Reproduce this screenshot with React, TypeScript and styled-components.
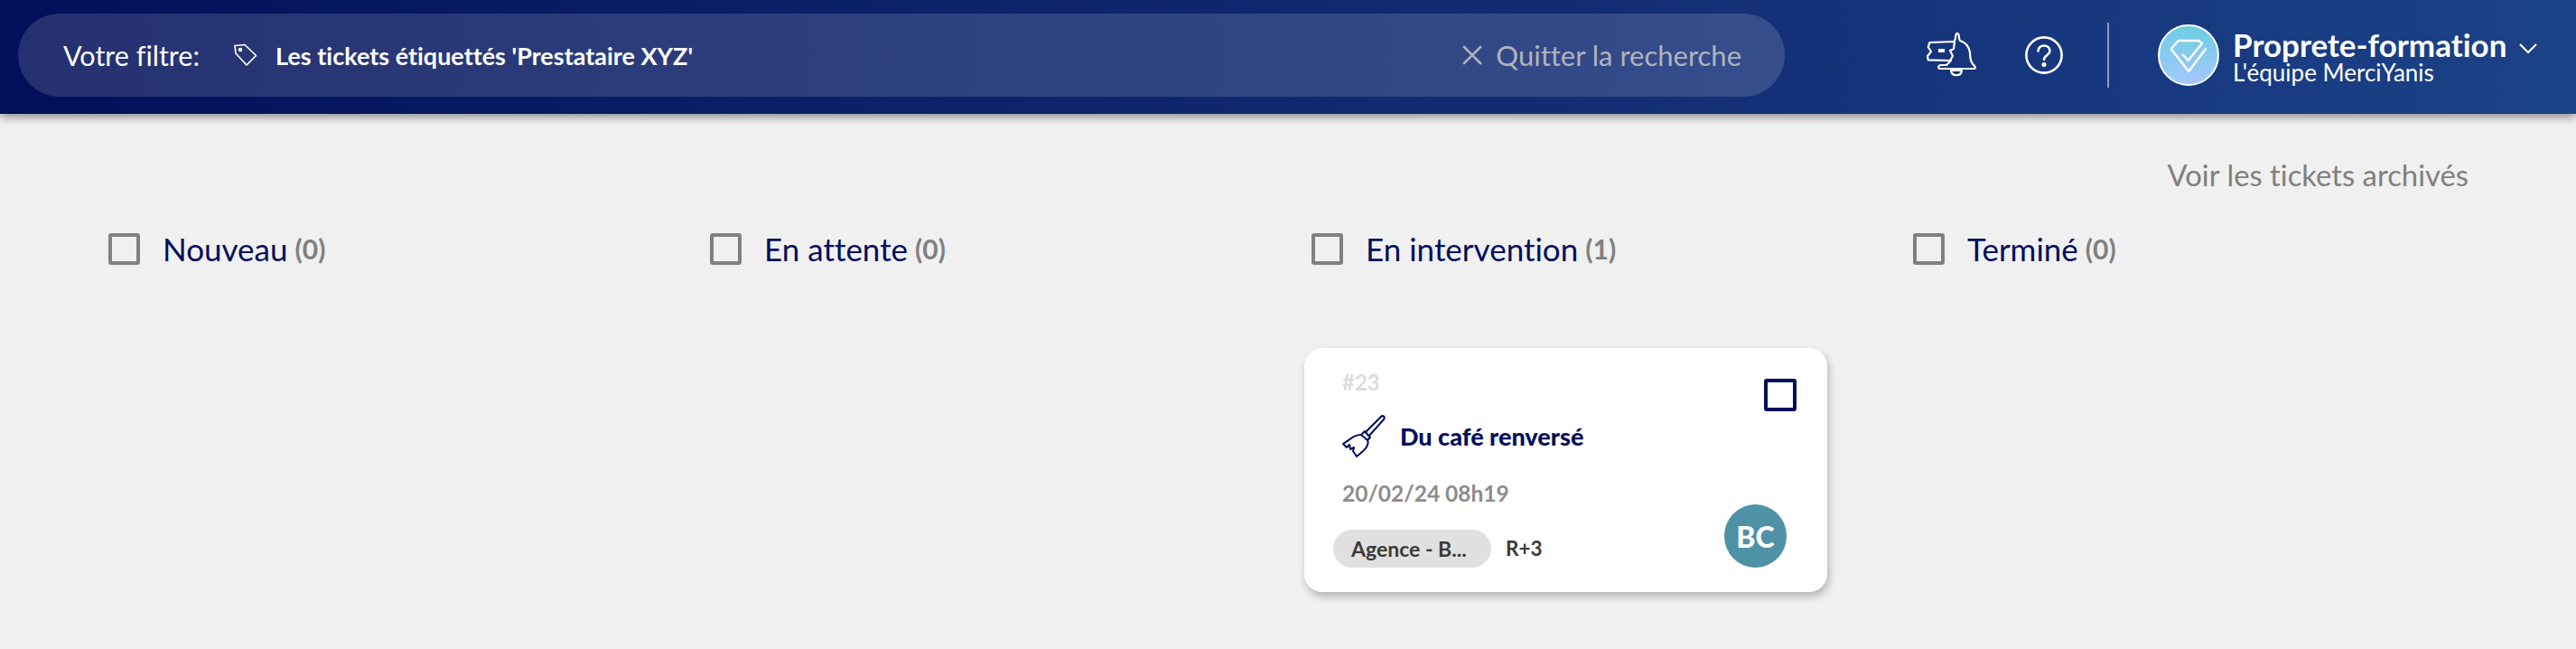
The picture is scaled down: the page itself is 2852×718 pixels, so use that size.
import React from "react";
import styled, { createGlobalStyle } from "styled-components";

const Global = createGlobalStyle`
  html, body { margin: 0; padding: 0; background: #f0f0f0; }
  body { font-family: Lato, "Noto Sans", sans-serif; overflow: hidden; font-variant-ligatures: none; }
`;
const Page = styled.div`
  width: 2852px;
  height: 718px;
  background: #f0f0f0;
  overflow: hidden;
`;
const Header = styled.header`
  height: 126px;
  box-sizing: border-box;
  display: flex;
  align-items: center;
  padding: 0 0 4px 20px;
  background: linear-gradient(90deg, #020f5a 0%, #0a1f68 30%, #122c74 60%, #1c4287 100%);
  box-shadow: 0 3px 10px rgba(0, 0, 0, 0.45);
  position: relative;
`;
const FilterPill = styled.div`
  width: 1956px;
  height: 92px;
  border-radius: 46px;
  background: rgba(255, 255, 255, 0.14);
  display: flex;
  align-items: center;
  padding: 0 48px 0 50px;
  box-sizing: border-box;
  color: #fff;
`;
const FilterLabel = styled.span`
  font-size: 30.5px;
  margin-right: 37px;
`;
const FilterValue = styled.span`
  font-size: 27px;
  font-weight: 700;
  margin-left: 19px;
`;
const Quit = styled.span`
  margin-left: auto;
  display: flex;
  align-items: center;
  gap: 15px;
  color: #b0b3bd;
  font-size: 31px;
`;
const HeaderRight = styled.div`
  display: flex;
  align-items: center;
  margin-left: 157px;
  color: #fff;
`;
const HelpSlot = styled.div`
  display: flex;
  margin-left: 53px;
`;
const Divider = styled.div`
  width: 2px;
  height: 72px;
  margin-left: 49px;
  background: rgba(255, 255, 255, 0.5);
`;
const Avatar = styled.div`
  width: 68px;
  height: 68px;
  box-sizing: border-box;
  margin-left: 54px;
  border-radius: 50%;
  border: 2px solid #fff;
  background: linear-gradient(180deg, #6ccde2, #a5c8fc);
  display: flex;
  align-items: center;
  justify-content: center;
`;
const Account = styled.div`
  margin-left: 15px;
  display: flex;
  flex-direction: column;
`;
const AccountName = styled.div`
  font-size: 35px;
  font-weight: 700;
  line-height: 38px;
  display: flex;
  align-items: center;
  gap: 14px;
`;
const ChevronSlot = styled.span`
  display: flex;
  margin-top: 10px;
`;
const AccountSub = styled.div`
  font-size: 26px;
  line-height: 24px;
`;
const Main = styled.main`
  padding: 49px 119px 0 112px;
`;
const Archived = styled.div`
  text-align: right;
  font-size: 32.8px;
  line-height: 38px;
  color: #808080;
`;
const Columns = styled.div`
  display: grid;
  grid-template-columns: repeat(4, 666px);
  margin-top: 42px;
`;
const Column = styled.section`
  display: flex;
  flex-direction: column;
`;
const ColumnHead = styled.div`
  display: flex;
  align-items: center;
  height: 40px;
  padding-left: 8px;
`;
const Box = styled.span<{ $color: string; $size: number; $top?: number }>`
  width: ${(p) => p.$size}px;
  height: ${(p) => p.$size}px;
  margin-top: ${(p) => p.$top ?? 0}px;
  box-sizing: border-box;
  border: 4px solid ${(p) => p.$color};
  border-radius: 3px;
  flex: none;
`;
const ColumnTitle = styled.span`
  margin-left: 25px;
  font-size: 35px;
  color: #020f5a;
`;
const Count = styled.span`
  margin-left: 8px;
  font-size: 30px;
  font-weight: 700;
  color: #808080;
`;
const Card = styled.article`
  margin-top: 90px;
  width: 579px;
  height: 270px;
  box-sizing: border-box;
  padding: 24px 34px 0 32px;
  background: #fff;
  border-radius: 20px;
  box-shadow: 2px 5px 8px rgba(0, 0, 0, 0.25);
  display: flex;
  flex-direction: column;
`;
const CardTop = styled.div`
  display: flex;
  justify-content: space-between;
  align-items: flex-start;
  height: 49px;
`;
const TicketId = styled.span`
  margin-left: 10px;
  font-size: 24px;
  line-height: 28px;
  font-weight: 700;
  color: #dcdcdc;
`;
const CardTitle = styled.div`
  display: flex;
  align-items: center;
  gap: 16px;
  margin-left: 10px;
  height: 48px;
  font-size: 27px;
  font-weight: 900;
  color: #020f5a;
`;
const CardDate = styled.div`
  margin: 24px 0 0 10px;
  font-size: 24.5px;
  line-height: 32px;
  font-weight: 700;
  color: #8c8c8c;
`;
const CardBottom = styled.div`
  display: flex;
  align-items: flex-end;
  margin-top: -4px;
`;
const Chip = styled.span`
  width: 175px;
  height: 42px;
  box-sizing: border-box;
  padding-left: 20px;
  border-radius: 21px;
  background: #e0e0e0;
  color: #3a3a3a;
  font-size: 23px;
  font-weight: 700;
  line-height: 42px;
`;
const More = styled.span`
  margin-left: 16px;
  height: 42px;
  line-height: 42px;
  font-size: 22.5px;
  font-weight: 700;
  color: #3a3a3a;
`;
const Person = styled.span`
  margin-left: auto;
  margin-right: 11px;
  width: 69px;
  height: 70px;
  border-radius: 50%;
  background: #4f92a8;
  color: #fff;
  font-size: 32px;
  font-weight: 900;
  display: flex;
  align-items: center;
  justify-content: center;
`;

const TagIcon = () => (
  <svg width="28" height="28" viewBox="0 0 28 28" fill="none" stroke="#fff" strokeWidth="1.7" strokeLinejoin="round">
    <path d="M2 3.5 L3 12 L15 25 L25.5 14.5 L13 2.5 Z" />
    <circle cx="8" cy="8" r="1.4" />
  </svg>
);
const CloseIcon = () => (
  <svg width="22" height="22" viewBox="0 0 22 22" stroke="#b0b3bd" strokeWidth="2.6" strokeLinecap="square">
    <path d="M2 2 L20 20 M20 2 L2 20" />
  </svg>
);
const BellIcon = () => (
  <svg width="56" height="50" viewBox="0 0 56 50" fill="none" stroke="#fff" strokeWidth="2.2" strokeLinejoin="round" strokeLinecap="round">
    <path d="M31 9 C33 7 31 1 34 1 C37 1 35 7 37 9 C44 11 47 16 48 22 C48 29 49 33 52 36 C55 38 54 40 52 40 L15 40 C12 40 13 36 16 36 L22 36 L27 31" />
    <path d="M27 42 C28 49 38 49 39 42 Z" />
    <path d="M3.4 11 L31 10 L30 18 L26 20 L29 26 L26 31 L1.7 30.4 L1 26 L5 21 L1.7 16 Z" />
    <path d="M13 20 L20 20" strokeWidth="4" strokeLinecap="butt" />
  </svg>
);
const HelpIcon = () => (
  <svg width="42" height="42" viewBox="0 0 42 42" fill="none" stroke="#fff" strokeWidth="2.6" strokeLinecap="round">
    <circle cx="21" cy="21" r="19.6" />
    <path d="M14.5 16.5 C14.5 8.5 27.5 8.5 27.5 16.5 C27.5 21 21 21 21 26" />
    <circle cx="21" cy="31.5" r="1.2" fill="#fff" />
  </svg>
);
const DiamondIcon = () => (
  <svg width="40" height="40" viewBox="0 0 40 40" fill="none" stroke="#fff" strokeWidth="2.4" strokeLinejoin="round">
    <path d="M39.5 12.3 L20.3 38 L0.7 13.3 L8.7 4 L31.3 4 L35 7 L19.7 25.7 L13 19" />
  </svg>
);
const Chevron = () => (
  <svg width="20" height="12" viewBox="0 0 20 12" fill="none" stroke="#fff" strokeWidth="2.2">
    <path d="M1 1 L10 10 L19 1" />
  </svg>
);
const BroomIcon = () => (
  <svg width="48" height="48" viewBox="0 0 48 48" fill="none" stroke="#020f5a" strokeWidth="2" strokeLinejoin="round">
    <path d="M25 21 L43 3 C45 1 48 3 46 6 L29 25" />
    <path d="M21 23 L25 19 L31 26 L28 29 Z" />
    <path d="M22 23 C15 22 9 28 1 33 L5 37 L8 34 L9 39 L13 37 L12 41 L16 47 C22 42 31 36 28 29" />
  </svg>
);

const columns = [
  { title: "Nouveau", count: 0 },
  { title: "En attente", count: 0 },
  { title: "En intervention", count: 1 },
  { title: "Terminé", count: 0 },
];

export default function App() {
  return (
    <Page>
      <Global />
      <Header>
        <FilterPill>
          <FilterLabel>Votre filtre:</FilterLabel>
          <TagIcon />
          <FilterValue>Les tickets étiquettés 'Prestataire XYZ'</FilterValue>
          <Quit>
            <CloseIcon />
            Quitter la recherche
          </Quit>
        </FilterPill>
        <HeaderRight>
          <BellIcon />
          <HelpSlot>
            <HelpIcon />
          </HelpSlot>
          <Divider />
          <Avatar>
            <DiamondIcon />
          </Avatar>
          <Account>
            <AccountName>
              Proprete-formation
              <ChevronSlot>
                <Chevron />
              </ChevronSlot>
            </AccountName>
            <AccountSub>L'équipe MerciYanis</AccountSub>
          </Account>
        </HeaderRight>
      </Header>
      <Main>
        <Archived>Voir les tickets archivés</Archived>
        <Columns>
          {columns.map((c) => (
            <Column key={c.title}>
              <ColumnHead>
                <Box $color="#808080" $size={35} />
                <ColumnTitle>{c.title}</ColumnTitle>
                <Count>({c.count})</Count>
              </ColumnHead>
              {c.count > 0 && (
                <Card>
                  <CardTop>
                    <TicketId>#23</TicketId>
                    <Box $color="#020f5a" $size={36} $top={10} />
                  </CardTop>
                  <CardTitle>
                    <BroomIcon />
                    Du café renversé
                  </CardTitle>
                  <CardDate>20/02/24 08h19</CardDate>
                  <CardBottom>
                    <Chip>Agence - B...</Chip>
                    <More>R+3</More>
                    <Person>BC</Person>
                  </CardBottom>
                </Card>
              )}
            </Column>
          ))}
        </Columns>
      </Main>
    </Page>
  );
}
